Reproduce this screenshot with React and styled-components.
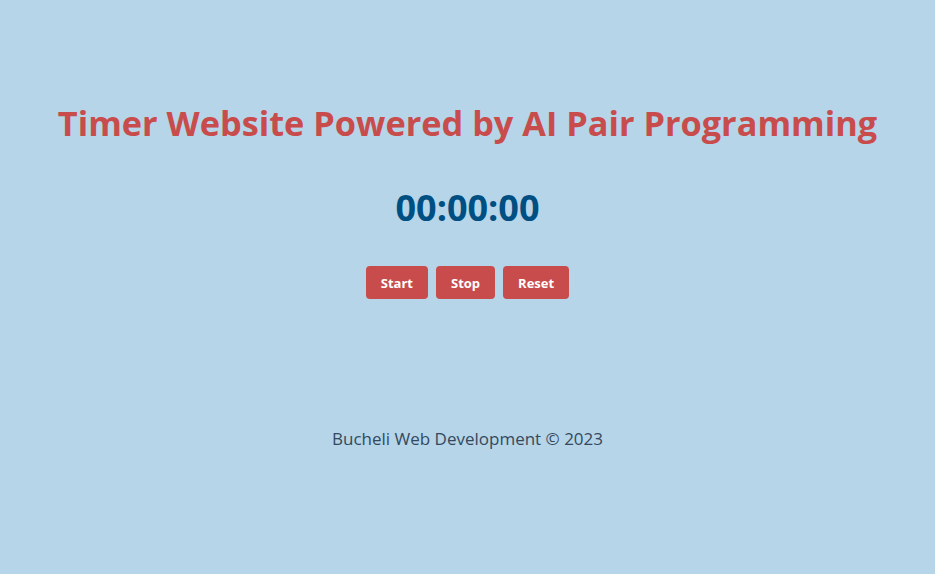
import React from "react";
import styled, { createGlobalStyle } from "styled-components";

const Global = createGlobalStyle`
  html, body { margin: 0; padding: 0; }
  body {
    background: #b6d5e8;
    font-family: "Open Sans", "Noto Sans", sans-serif;
  }
`;

const Page = styled.div`
  min-height: 574px;
  display: flex;
  flex-direction: column;
  align-items: center;
  padding-top: 99px;
  box-sizing: border-box;
`;

const Title = styled.h1`
  margin: 0;
  color: #c94c4c;
  font-size: 34.3px;
  font-weight: 700;
  line-height: 48px;
`;

const Clock = styled.div`
  margin-top: 37px;
  color: #004f83;
  font-size: 36px;
  font-weight: 700;
  line-height: 48px;
`;

const Controls = styled.div`
  margin-top: 34px;
  display: flex;
  gap: 8px;
`;

const Button = styled.button`
  height: 33px;
  padding: 0 15px;
  border: none;
  border-radius: 4px;
  background: #c94c4c;
  color: #fff;
  font-family: "Open Sans", "Noto Sans", sans-serif;
  font-weight: 700;
  font-size: 13px;
  cursor: pointer;
`;

const Footer = styled.footer`
  margin-top: 128px;
  color: #34495e;
  font-size: 17px;
  line-height: 24px;
`;

export default function App() {
  return (
    <>
      <Global />
      <Page>
        <Title>Timer Website Powered by AI Pair Programming</Title>
        <Clock>00:00:00</Clock>
        <Controls>
          <Button>Start</Button>
          <Button>Stop</Button>
          <Button>Reset</Button>
        </Controls>
        <Footer>Bucheli Web Development © 2023</Footer>
      </Page>
    </>
  );
}
